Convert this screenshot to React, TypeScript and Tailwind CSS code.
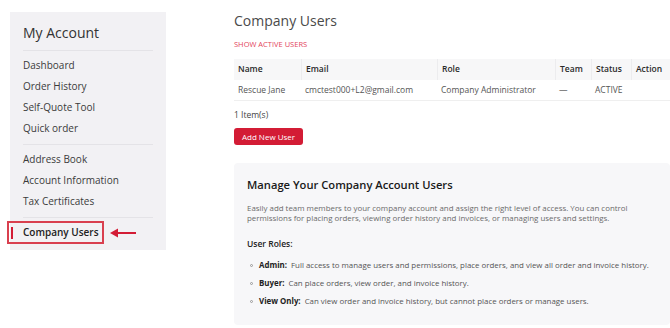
import React from "react";

const navGroups = [
  ["Dashboard", "Order History", "Self-Quote Tool", "Quick order"],
  ["Address Book", "Account Information", "Tax Certificates"],
];

const columns = [
  { label: "Name", w: "w-[67px]" },
  { label: "Email", w: "w-[136px]" },
  { label: "Role", w: "w-[118px]" },
  { label: "Team", w: "w-[36px]" },
  { label: "Status", w: "w-[40px]" },
  { label: "Action", w: "flex-1" },
];

const row = ["Rescue Jane", "cmctest000+L2@gmail.com", "Company Administrator", "—", "ACTIVE", ""];

const roles = [
  { name: "Admin:", text: "Full access to manage users and permissions, place orders, and view all order and invoice history." },
  { name: "Buyer:", text: "Can place orders, view order, and invoice history." },
  { name: "View Only:", text: "Can view order and invoice history, but cannot place orders or manage users." },
];

function Sidebar() {
  return (
    <aside className="mt-[12px] ml-[10px] w-[156px] h-[238px] bg-[#f2f1f4] px-[13px] pt-[11px]">
      <h2 className="text-[14px] leading-[20px] text-[#333] font-medium">My Account</h2>
      <div className="mt-[7px] h-px bg-[#e4e3e7]" />
      {navGroups.map((group, gi) => (
        <div key={gi}>
          <ul className="py-[4px]">
            {group.map((item) => (
              <li key={item} className="h-[21px] flex items-center text-[10px] text-[#3b3b3b]">
                {item}
              </li>
            ))}
          </ul>
          <div className="mt-[1px] h-px bg-[#e4e3e7]" />
        </div>
      ))}
      {/* active item */}
      <div className="relative mt-[4px] h-[21px] flex items-center text-[10px] font-semibold text-[#222]">
        <span className="absolute left-[-12px] top-[5px] w-[2px] h-[12px] bg-[#d31c35]" />
        Company Users
        {/* annotation box + arrow */}
        <span className="absolute left-[-16px] top-[-1px] w-[97px] h-[23px] ring-2 ring-inset ring-[#d9404f]" />
        <svg className="absolute left-[87px] top-[5px]" width="27" height="12" viewBox="0 0 27 12">
          <path d="M26 6H6" stroke="#d31c35" strokeWidth="2" />
          <path d="M0 6L8 1.5V10.5Z" fill="#d31c35" />
        </svg>
      </div>
    </aside>
  );
}

export default function App() {
  return (
    <div className="w-[670px] h-[328px] bg-white flex font-['Open_Sans',sans-serif] overflow-hidden">
      <Sidebar />
      <main className="ml-[68px] flex-1 pt-[11px]">
        <h1 className="text-[14px] leading-[20px] text-[#4a4a4a]">Company Users</h1>
        <div className="mt-[7px] text-[7.5px] leading-[12px] text-[#e3455d] font-medium">SHOW ACTIVE USERS</div>

        {/* Users table */}
        <div className="mt-[9px] text-[8.5px]">
          <div className="flex h-[21px] items-center bg-[#f7f7f8] font-semibold text-[#2a2a2a]">
            {columns.map((c, i) => (
              <div key={c.label} className={`${c.w} h-full flex items-center pl-[4px] ${i > 0 ? "border-l border-[#ececee]" : ""}`}>
                {c.label}
              </div>
            ))}
          </div>
          <div className="flex h-[21px] items-center border-b border-[#efefef] text-[#555]">
            {columns.map((c, i) => (
              <div key={c.label} className={`${c.w} pl-[4px]`}>
                {row[i]}
              </div>
            ))}
          </div>
        </div>

        <div className="mt-[8px] text-[8.5px] leading-[12px] text-[#444]">1 Item(s)</div>
        <button className="mt-[7px] h-[17px] w-[69px] rounded-[3px] bg-[#d31c35] text-white text-[8px] font-medium">
          Add New User
        </button>

        {/* Info panel */}
        <section className="mt-[17px] h-[162px] rounded-[4px] bg-[#f7f7f9] px-[13px] pt-[14px]">
          <h3 className="text-[11.2px] leading-[16px] font-semibold text-[#1a1a1a]">Manage Your Company Account Users</h3>
          <p className="mt-[10px] text-[7.9px] leading-[10.5px] text-[#6b6b6b]">
            Easily add team members to your company account and assign the right level of access. You can control
            permissions for placing orders, viewing order history and invoices, or managing users and settings.
          </p>
          <h4 className="mt-[14px] text-[8.5px] leading-[12px] font-semibold text-[#222]">User Roles:</h4>
          <ul className="mt-[10px] flex flex-col gap-[6px]">
            {roles.map((r) => (
              <li key={r.name} className="flex items-center h-[12px] whitespace-nowrap text-[7.9px] text-[#555]">
                <span className="ml-[3px] mr-[6px] w-[3px] h-[3px] rounded-full border border-[#999]" />
                <span className="font-bold text-[#222] mr-[4px]">{r.name}</span>
                {r.text}
              </li>
            ))}
          </ul>
        </section>
      </main>
    </div>
  );
}
